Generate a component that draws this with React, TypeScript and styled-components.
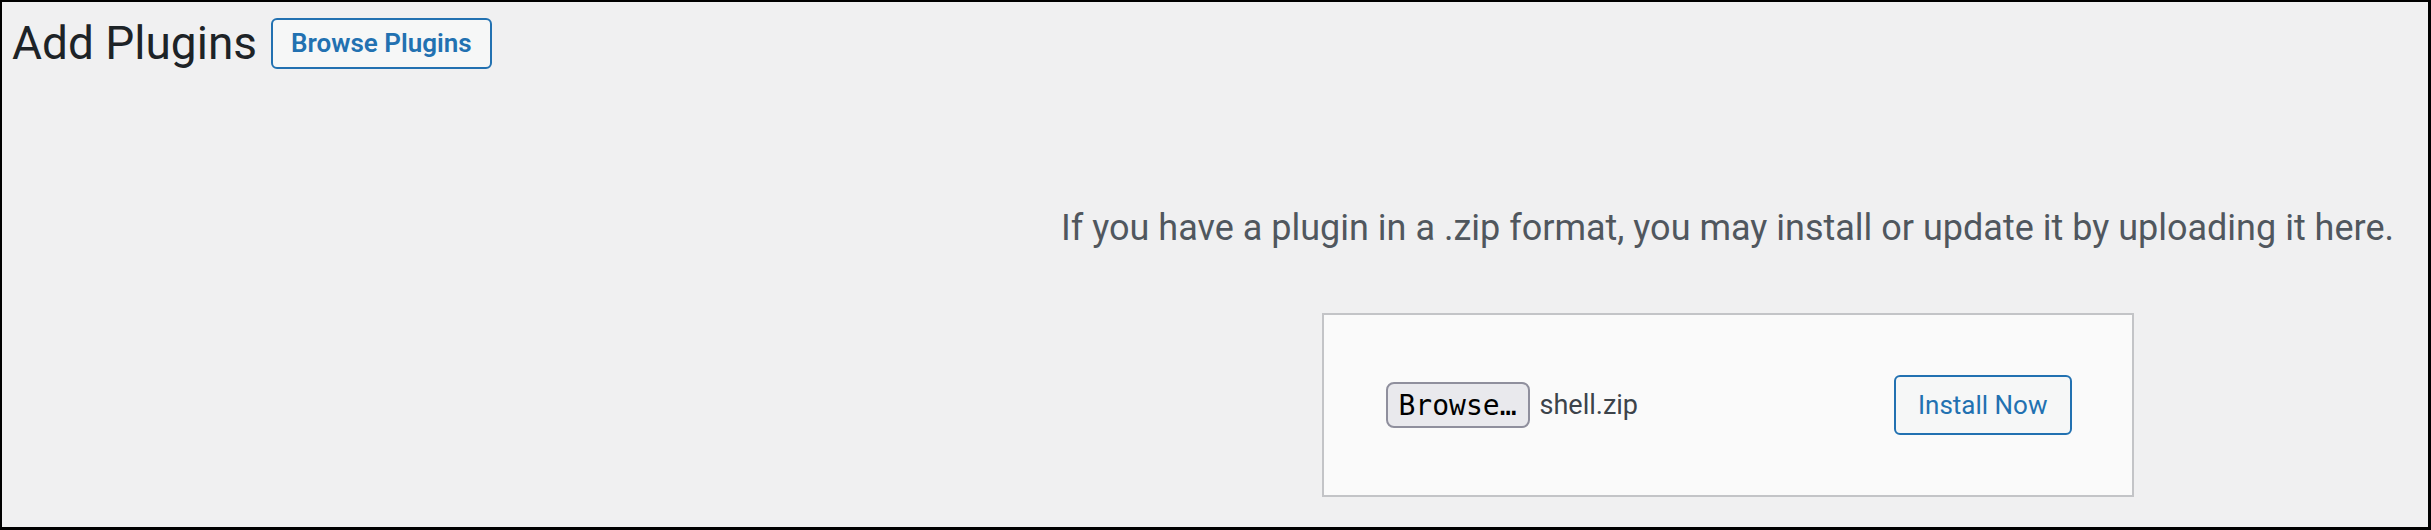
import React from "react";
import styled, { createGlobalStyle } from "styled-components";

const GlobalStyle = createGlobalStyle`
  html, body {
    margin: 0;
    padding: 0;
    background: #f0f0f1;
  }
  * { box-sizing: border-box; }
`;

const Frame = styled.div`
  width: 2431px;
  height: 530px;
  border: 2px solid #000;
  border-right-width: 3px;
  border-bottom-width: 3px;
  background: #f0f0f1;
  font-family: Roboto, "Noto Sans", sans-serif;
  color: #1d2327;
  overflow: hidden;
`;

const Header = styled.div`
  display: flex;
  align-items: center;
  gap: 14px;
  padding: 15px 0 0 10px;
`;

const Title = styled.h1`
  margin: 0;
  font-size: 46px;
  font-weight: 400;
  line-height: 52px;
  color: #1d2327;
`;

const OutlineButton = styled.button<{ $weight?: number; $height: number; $padX: number }>`
  display: inline-flex;
  align-items: center;
  justify-content: center;
  height: ${(p) => p.$height}px;
  padding: 0 ${(p) => p.$padX}px;
  border: 2px solid #2271b1;
  border-radius: 6px;
  background: #f6f7f7;
  color: #2271b1;
  font-family: inherit;
  font-size: 26px;
  font-weight: ${(p) => p.$weight ?? 400};
  cursor: pointer;
`;

const UploadSection = styled.section`
  padding-left: 1025px;
  display: flex;
  flex-direction: column;
  align-items: center;
`;

const Help = styled.p`
  margin: 0;
  padding-top: 135px;
  font-size: 36px;
  line-height: 48px;
  color: #50575e;
  text-align: center;
`;

const UploadCard = styled.form`
  margin-top: 61px;
  width: 812px;
  padding: 60px;
  display: flex;
  align-items: center;
  justify-content: space-between;
  background: #fafafa;
  border: 2px solid #c3c4c7;
`;

const FileField = styled.div`
  display: flex;
  align-items: center;
  gap: 10px;
  padding-left: 2px;
`;

const FileButton = styled.span`
  display: inline-flex;
  align-items: center;
  height: 46px;
  padding: 0 11px;
  border: 2px solid #8f8f9d;
  border-radius: 8px;
  background: #e9e9ed;
  color: #000;
  font-family: "DejaVu Sans Mono", monospace;
  font-size: 28px;
`;

const FileName = styled.span`
  font-size: 27px;
  color: #3c434a;
`;

export default function App() {
  return (
    <>
      <GlobalStyle />
      <Frame>
        <Header>
          <Title>Add Plugins</Title>
          <OutlineButton $weight={600} $height={51} $padX={18}>
            Browse Plugins
          </OutlineButton>
        </Header>
        <UploadSection>
          <Help>
            If you have a plugin in a .zip format, you may install or update it by uploading it here.
          </Help>
          <UploadCard onSubmit={(e) => e.preventDefault()}>
            <FileField>
              <FileButton>Browse…</FileButton>
              <FileName>shell.zip</FileName>
            </FileField>
            <OutlineButton $height={60} $padX={22}>
              Install Now
            </OutlineButton>
          </UploadCard>
        </UploadSection>
      </Frame>
    </>
  );
}
